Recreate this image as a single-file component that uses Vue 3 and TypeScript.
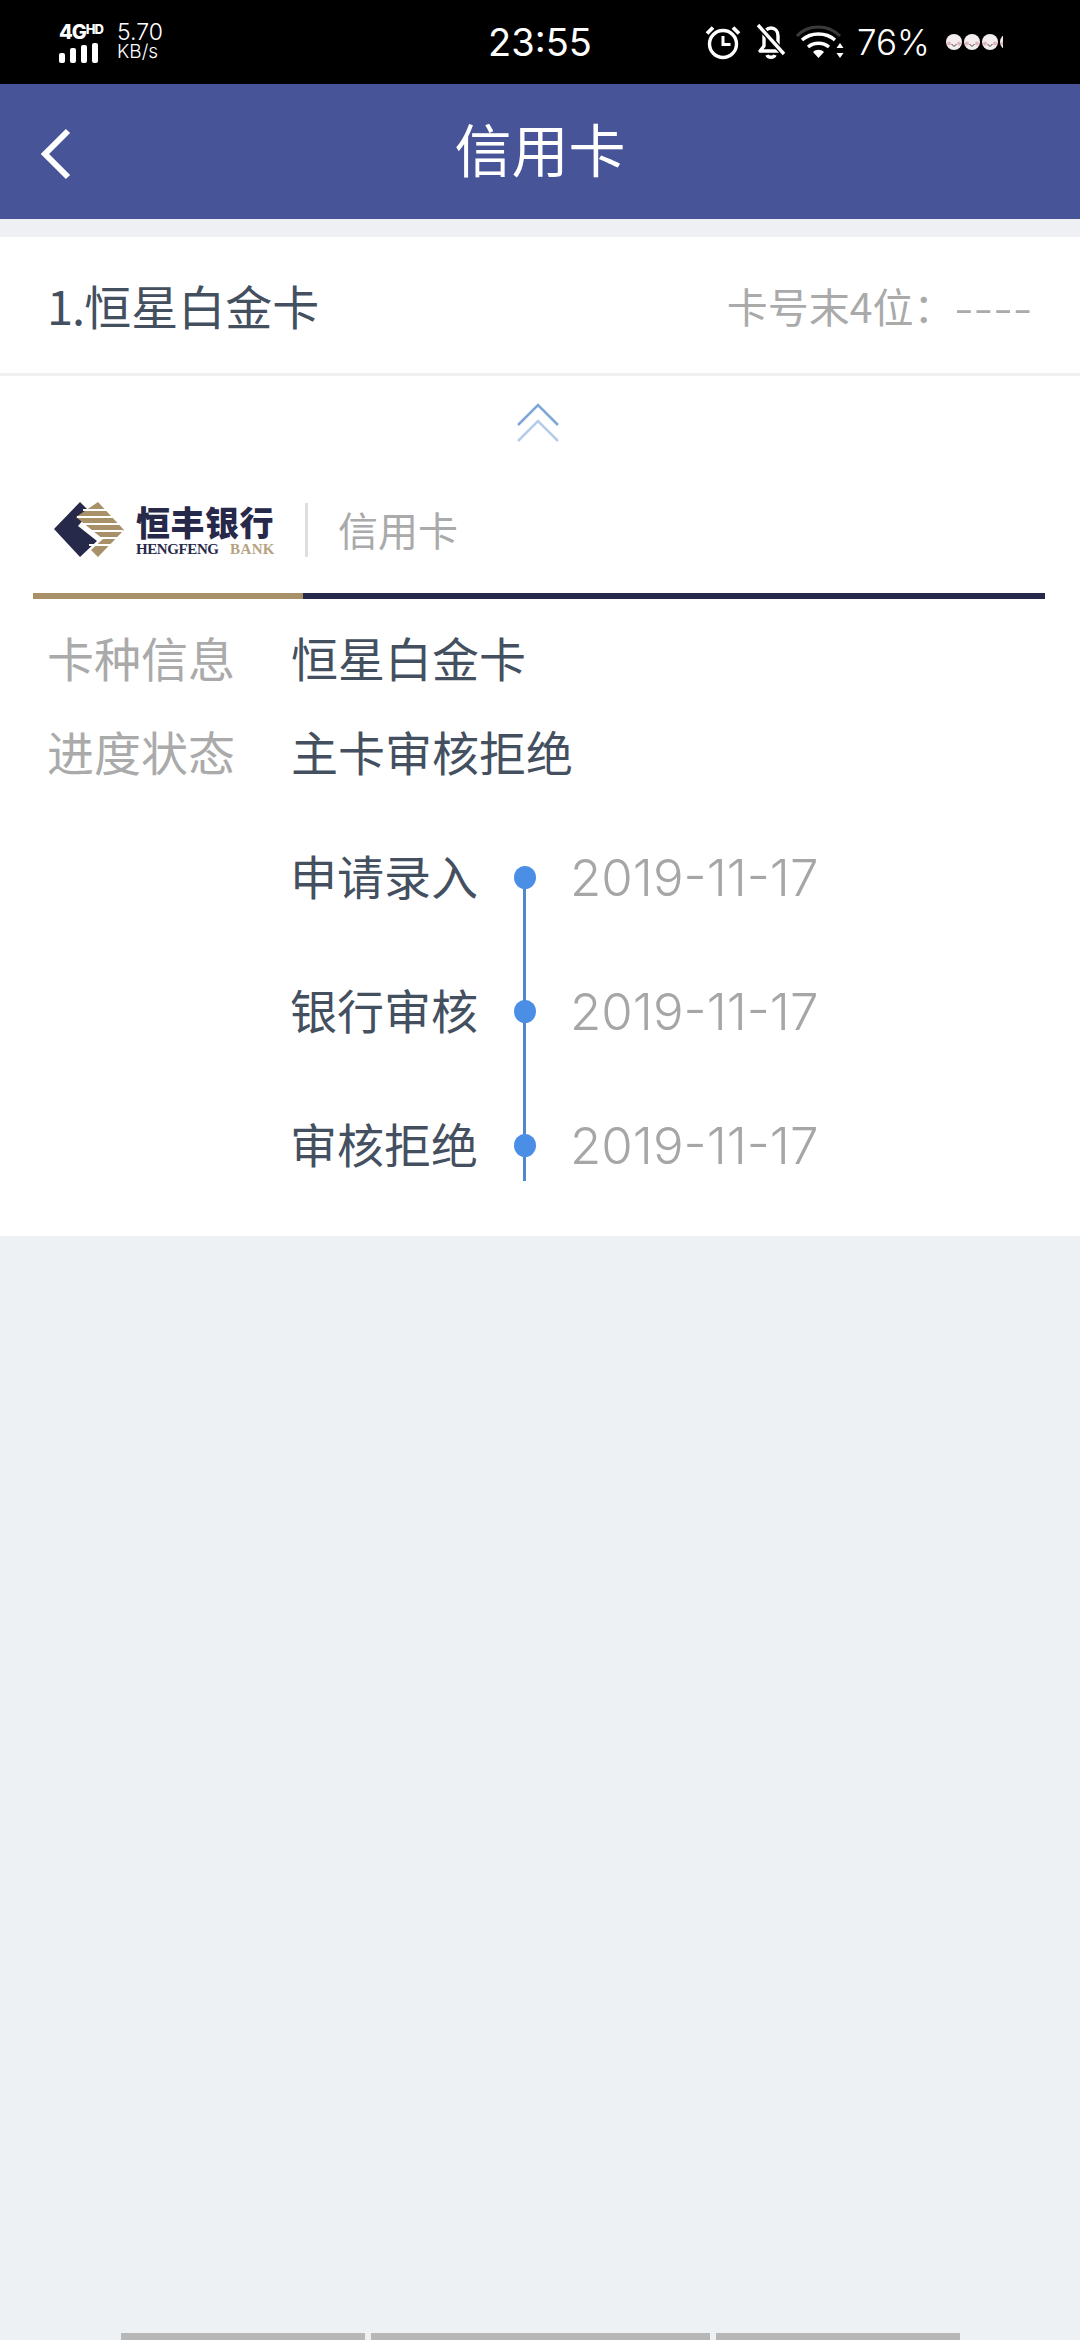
<script setup lang="ts">
const steps = [
  { name: '申请录入', date: '2019-11-17' },
  { name: '银行审核', date: '2019-11-17' },
  { name: '审核拒绝', date: '2019-11-17' },
];
const signalBars = [10, 15, 18, 20];
</script>

<template>
  <div class="page">
    <div class="status">
      <div class="status-left">
        <div class="network">
          <div class="net-type">4G<sup>HD</sup></div>
          <div class="bars">
            <i v-for="h in signalBars" :key="h" :style="{ height: `${h}px` }" />
          </div>
        </div>
        <div class="speed">
          <span class="speed-num">5.70</span>
          <span class="speed-unit">KB/s</span>
        </div>
      </div>
      <div class="time">23:55</div>
      <div class="status-right">
        <svg class="ic-alarm" width="36" height="36" viewBox="0 0 36 36" fill="none" stroke="#fff">
          <circle cx="18" cy="20" r="13.5" stroke-width="3.4" />
          <path d="M18 12v8.5h7.5" stroke-width="3" />
          <path d="M2 9.5 8 3.5M34 9.5 28 3.5" stroke-width="3.8" />
        </svg>
        <svg class="ic-bell" width="34" height="38" viewBox="0 0 34 38" fill="none" stroke="#fff">
          <path d="M10 13c0-5 3-8 7-8s7 3 7 8v10l4 5H6l4-5z" stroke-width="3.4" stroke-linejoin="round" />
          <path d="M13 32c1 3 7 3 8 0" stroke-width="3.400" />
          <path d="M4 2l26 29" stroke="#000" stroke-width="6" />
          <path d="M4 2l26 29" stroke-width="3.400" />
        </svg>
        <svg class="ic-wifi" width="48" height="36" viewBox="0 0 48 36" fill="none">
          <path d="M1 12C12 0 32 0 44 12" stroke="#3a3a3a" stroke-width="3" />
          <path d="M6 16c9-8 24-8 33 0" stroke="#fff" stroke-width="3.4" />
          <path d="M12 23c6-5 15-5 21 0" stroke="#fff" stroke-width="3.4" />
          <path d="M17 28c3-3 8-3 11 0l-5.500 6z" fill="#fff" />
          <path d="M44 19l3.500 5h-7zM44 34l3.500-5h-7z" fill="#fff" />
        </svg>
        <span class="battery">76%</span>
        <div class="avatars">
          <svg v-for="n in 4" :key="n" width="16" height="16" viewBox="0 0 16 16">
            <circle cx="8" cy="8" r="8" fill="#f3edee" />
            <circle cx="3" cy="9.500" r="2" fill="#e2b4bc" />
            <circle cx="13" cy="9.500" r="2" fill="#e2b4bc" />
            <path d="M5.500 10 8 12.500 10.500 10" fill="none" stroke="#444" stroke-width="1" />
          </svg>
        </div>
      </div>
    </div>

    <header class="nav">
      <svg class="back" width="34" height="52" viewBox="0 0 34 52" fill="none">
        <path d="M30 3 7 26l23 23" stroke="#fff" stroke-width="6" />
      </svg>
      <h1>信用卡</h1>
    </header>

    <div class="card-row">
      <span class="card-name"><span class="card-index">1.</span>恒星白金卡</span>
      <span class="card-no">卡号末4位：<span class="card-dash">----</span></span>
    </div>

    <section class="detail">
      <svg class="collapse" width="44" height="40" viewBox="0 0 44 40" fill="none" stroke-width="2.5">
        <path d="M2 22 22 2l20 20" stroke="#7fa6d8" />
        <path d="M2 38 22 18l20 20" stroke="#b5cdea" />
      </svg>

      <div class="brand">
        <svg width="72" height="58" viewBox="0 0 72 58">
          <path d="M27 1 1 28l26 28 17-16-19-15 12-14z" fill="#27294a" />
          <path d="M45 1 71 29 45 56 38 49l12-11-10-8-17-14z" fill="#a89169" />
          <path d="M30 9h30M24 16h42M28 23h42M36 30h34M44 37h22M36 44h24" stroke="#fff" stroke-width="1.800" />
        </svg>
        <div class="brand-name">
          <strong>恒丰银行</strong>
          <span class="brand-en">HENGFENG <em>BANK</em></span>
        </div>
        <i class="brand-sep" />
        <span class="brand-type">信用卡</span>
      </div>

      <div class="rule"><i /></div>

      <div class="info">
        <div class="info-row">
          <span class="label">卡种信息</span>
          <span class="value">恒星白金卡</span>
        </div>
        <div class="info-row">
          <span class="label">进度状态</span>
          <span class="value">主卡审核拒绝</span>
        </div>
      </div>

      <ul class="timeline">
        <li v-for="(step, i) in steps" :key="i" :class="{ last: i === steps.length - 1 }">
          <span class="step-name">{{ step.name }}</span>
          <span class="axis"><i class="dot" /></span>
          <span class="step-date">{{ step.date }}</span>
        </li>
      </ul>
    </section>

    <div class="gesture">
      <i class="g1" />
      <i class="g2" />
      <i class="g3" />
    </div>
  </div>
</template>

<style scoped>
.page {
  width: 1080px;
  height: 2340px;
  display: flex;
  flex-direction: column;
  background: #edf1f3;
  font-family: "Noto Sans CJK SC", "Noto Sans", sans-serif;
  overflow: hidden;
}

.status {
  height: 84px;
  flex: none;
  background: #000;
  color: #fff;
  display: grid;
  grid-template-columns: 1fr auto 1fr;
  align-items: center;
  font-family: Inter, "Liberation Sans", sans-serif;
}

.status-left {
  display: flex;
  align-items: center;
  gap: 15px;
  padding-left: 59px;
}

.network {
  display: flex;
  flex-direction: column;
  gap: 1px;
  width: 43px;
}

.net-type {
  font-size: 20px;
  font-weight: 800;
  line-height: 20px;
  letter-spacing: -1px;
  white-space: nowrap;
}

.net-type sup {
  font-size: 13px;
  line-height: 12px;
  vertical-align: 5px;
}

.bars {
  display: flex;
  align-items: flex-end;
  gap: 5px;
  height: 20px;
}

.bars i {
  width: 6px;
  background: #fff;
  border-radius: 2px;
}

.speed {
  display: flex;
  flex-direction: column;
  line-height: 19px;
}

.speed-num {
  font-size: 23px;
  font-weight: 300;
}

.speed-unit {
  font-size: 19px;
  font-weight: 300;
}

.time {
  font-size: 38px;
  font-weight: 400;
}

.status-right {
  display: flex;
  align-items: center;
  padding-left: 113px;
}

.ic-bell {
  margin-left: 13px;
}

.ic-wifi {
  margin-left: 8px;
}

.battery {
  font-size: 35px;
  margin-left: 13px;
  font-weight: 300;
}

.avatars {
  display: flex;
  gap: 2px;
  width: 57px;
  margin-left: 16px;
  overflow: hidden;
}

.avatars svg {
  flex: none;
}

.nav {
  height: 135px;
  flex: none;
  background: #475497;
  display: flex;
  align-items: center;
  justify-content: center;
  position: relative;
}

.nav h1 {
  margin: 0;
  color: #fff;
  font-size: 57px;
  font-weight: 400;
  line-height: 1;
  position: relative;
  top: -4px;
}

.back {
  position: absolute;
  left: 38px;
  top: 44px;
}

.card-row {
  border-top: 18px solid #eef0f3;
  height: 136px;
  flex: none;
  background: #fff;
  border-bottom: 3px solid #eef0f2;
  display: flex;
  align-items: center;
  justify-content: space-between;
  padding: 0 48px;
}

.card-name {
  font-size: 47px;
  color: #44505f;
  margin-top: -2px;
}

.card-index {
  letter-spacing: -1px;
  margin-left: -1px;
}

.card-no {
  font-size: 41px;
  color: #aaaaaa;
  white-space: nowrap;
}

.card-dash {
  font-size: 56px;
  font-weight: 300;
  line-height: 1;
  letter-spacing: 1px;
  vertical-align: -4px;
  margin-right: -1px;
}

.detail {
  height: 860px;
  flex: none;
  background: #fff;
  display: flex;
  flex-direction: column;
}

.collapse {
  align-self: center;
  margin: 27px 0 0 -4px;
  flex: none;
}

.brand {
  display: flex;
  align-items: center;
  margin: 58px 0 0 53px;
  height: 58px;
}

.brand-name {
  display: flex;
  flex-direction: column;
  margin-left: 11px;
}

.brand-name strong {
  font-size: 34px;
  line-height: 38px;
  color: #27294a;
  font-weight: 900;
  letter-spacing: 0.5px;
}

.brand-en {
  font-family: "Liberation Serif", serif;
  font-weight: 700;
  font-size: 15px;
  line-height: 16px;
  color: #27294a;
  white-space: pre;
  word-spacing: 8px;
  letter-spacing: -0.4px;
}

.brand-en em {
  font-style: normal;
  color: #b5a27f;
  letter-spacing: 0.4px;
}

.brand-sep {
  width: 3px;
  height: 54px;
  background: #dedede;
  margin-left: 30px;
}

.brand-type {
  font-size: 40px;
  color: #aaaaaa;
  margin: -2px 0 0 30px;
  white-space: nowrap;
}

.rule {
  height: 6px;
  margin: 34px 35px 0 33px;
  background: #27294a;
  flex: none;
}

.rule i {
  display: block;
  width: 270px;
  height: 100%;
  background: #a89169;
}

.info {
  display: flex;
  flex-direction: column;
  gap: 26px;
  margin-top: 23px;
  padding-left: 47px;
}

.info-row {
  display: flex;
  height: 68px;
  align-items: center;
  font-size: 47px;
}

.label {
  width: 244px;
  color: #aaaaaa;
}

.value {
  color: #44505f;
}

.timeline {
  list-style: none;
  margin: 26px 0 0;
  padding: 0;
}

.timeline li {
  height: 134px;
  display: flex;
  align-items: center;
}

.step-name {
  width: 478px;
  text-align: right;
  font-size: 47px;
  color: #44505f;
  margin-bottom: 6px;
}

.axis {
  width: 22px;
  height: 100%;
  margin-left: 36px;
  position: relative;
  display: flex;
  align-items: center;
  justify-content: center;
}

.axis::before {
  content: "";
  position: absolute;
  left: 9px;
  top: 67px;
  width: 3px;
  height: 134px;
  background: #5088d0;
}

.last .axis::before {
  height: 36px;
}

.dot {
  width: 23px;
  height: 23px;
  border-radius: 50%;
  background: #4a8ee6;
  position: relative;
  z-index: 1;
}

.step-date {
  margin-left: 34px;
  font-family: Inter, "Liberation Sans", sans-serif;
  font-size: 51px;
  font-weight: 300;
  color: #a6a6a6;
}

.gesture {
  margin-top: auto;
  height: 7px;
  display: flex;
  gap: 6px;
  padding-left: 121px;
}

.gesture i {
  background: #b7b7b7;
  height: 100%;
  display: block;
}

.g1 {
  width: 244px;
}

.g2 {
  width: 339px;
}

.g3 {
  width: 244px;
}
</style>

<style>
html,
body {
  margin: 0;
  padding: 0;
  background: #edf1f3;
}
</style>
